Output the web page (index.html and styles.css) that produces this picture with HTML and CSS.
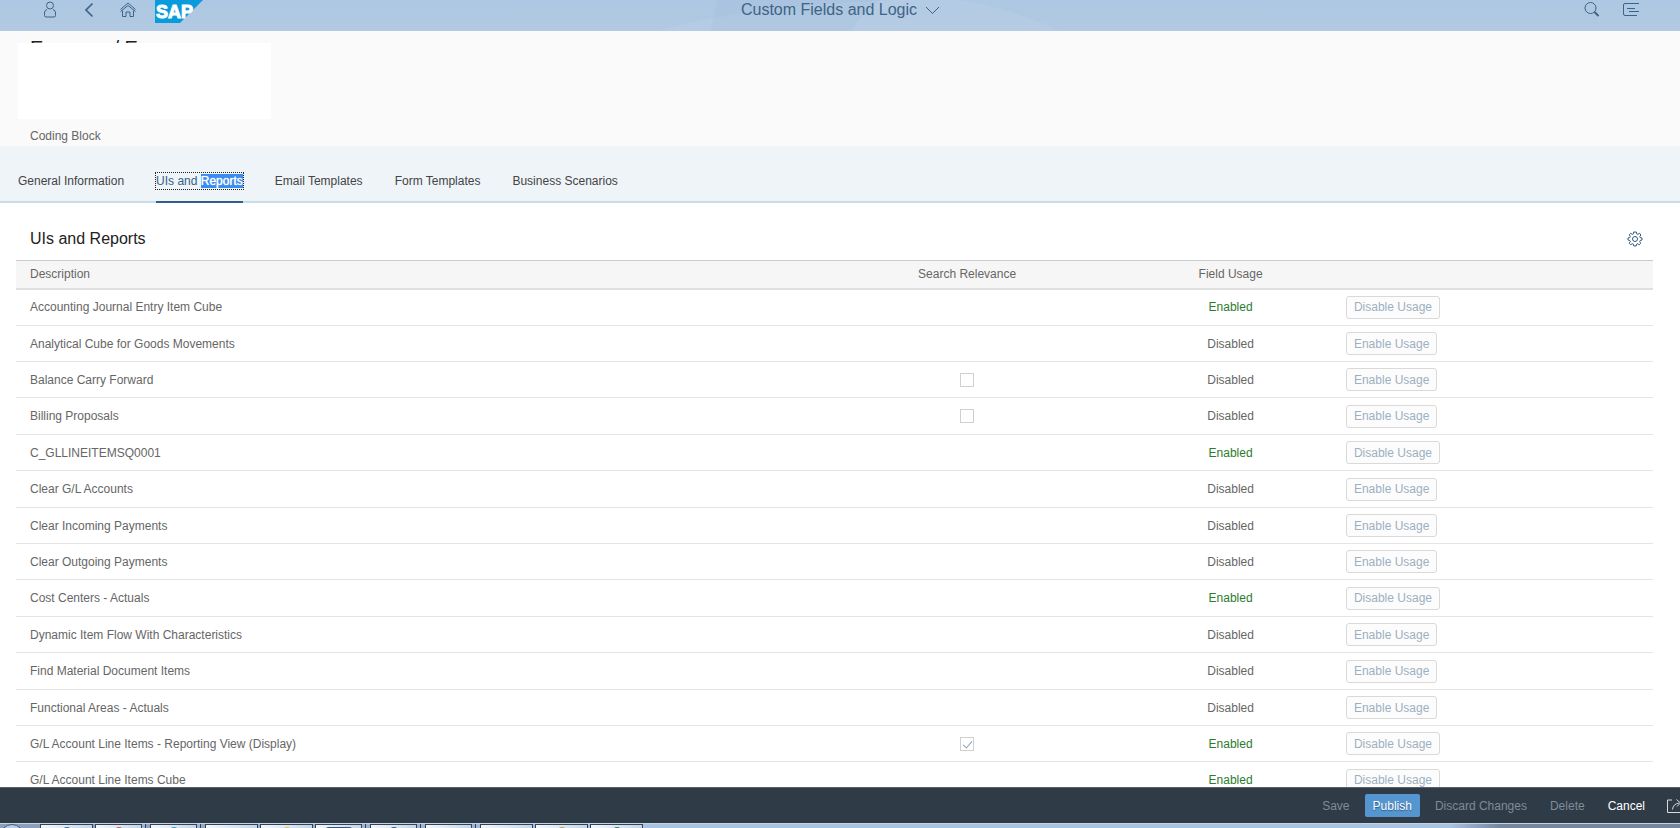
FILE: index.html
```
<!DOCTYPE html>
<html lang="en">
<head>
<meta charset="utf-8">
<title>Custom Fields and Logic</title>
<link rel="stylesheet" href="styles.css">
</head>
<body>
<header class="shell">
  <svg class="shell-art" viewBox="0 0 1680 31" preserveAspectRatio="none" aria-hidden="true"><path d="M660 31Q740 6 900 0H960Q1010 8 1060 31Z" fill="#fff" opacity=".07"/><path d="M718 0H880Q860 14 852 31H710Z" fill="#7da7cc" opacity=".1"/></svg>
  <nav class="shell-left">
    <button class="icon-btn" aria-label="User"><svg width="16" height="18" viewBox="0 0 16 18"><circle cx="8" cy="5.500" r="3.500"/><path d="M5 9.500Q2.500 10 2.500 13V15.500Q2.500 17 4 17H12Q13.500 17 13.500 15.500V13Q13.500 10 11 9.500"/></svg></button>
    <button class="icon-btn" aria-label="Back"><svg width="16" height="18" viewBox="0 0 16 18"><path d="M11.500 3.500L5 10L11.500 16.500" stroke-width="1.700"/></svg></button>
    <button class="icon-btn" aria-label="Home"><svg width="16" height="18" viewBox="0 0 16 18"><path d="M.5 9.500L8 3L15.500 9.500M.5 11.500L8 5.500L15.500 11.500M2.500 10.500V16.500H6V12H10V16.500H13.500V10.500"/></svg></button>
    <a class="logo" href="#" aria-label="SAP"><svg width="48" height="23" viewBox="0 0 48 23"><path d="M0 0H48L25 23H0Z" fill="#0a9bdc"/><text x="1" y="18" class="logo-text">SAP</text></svg></a>
  </nav>
  <button class="shell-title">Custom Fields and Logic <svg width="16" height="10" viewBox="0 0 16 10"><path d="M1 2L7.500 8.500L14 2"/></svg></button>
  <nav class="shell-right">
    <button class="icon-btn" aria-label="Search"><svg width="16" height="18" viewBox="0 0 16 18"><circle cx="6.500" cy="8" r="5.500"/><path d="M10.500 12L14.500 16" stroke-width="2"/></svg></button>
    <button class="icon-btn" aria-label="Notifications"><svg width="18" height="18" viewBox="0 0 18 18"><path d="M17 3.500H3Q1.500 3.500 1.500 5V14Q1.500 15.500 3 15.500H15M5 8.500H13M7 11.500H17"/></svg></button>
  </nav>
</header>

<main class="page">
  <section class="object-header">
    <h1 class="object-title">Expense / Ex</h1>
    <div class="cover"></div>
    <p class="object-sub">Coding Block</p>
  </section>
  <nav class="tabs">
    <a class="tab" href="#"><span>General Information</span></a>
    <a class="tab tab-active" href="#"><span>UIs and <mark>Reports</mark></span></a>
    <a class="tab" href="#"><span>Email Templates</span></a>
    <a class="tab" href="#"><span>Form Templates</span></a>
    <a class="tab" href="#"><span>Business Scenarios</span></a>
  </nav>
  <section class="content">
    <div class="toolbar">
      <h2>UIs and Reports</h2>
      <button class="icon-btn" aria-label="Settings"><svg width="16" height="16" viewBox="0 0 16 16"><path d="M6.700 1H9.300L9.700 2.900L10.900 3.400L12.500 2.300L13.900 4L12.800 5.400L13.200 6.600L15 7V9L13.200 9.500L12.700 10.700L13.700 12.300L12.200 13.800L10.700 12.700L9.600 13.200L9.200 15H6.800L6.400 13.200L5.200 12.700L3.700 13.700L2.200 12.200L3.300 10.700L2.800 9.500L1 9V7L2.800 6.500L3.300 5.300L2.200 3.800L3.800 2.300L5.200 3.400L6.400 2.900Z"/><circle cx="8" cy="8" r="2.500"/></svg></button>
    </div>
    <table class="grid">
      <colgroup><col class="c-desc"><col class="c-search"><col class="c-usage"><col class="c-action"></colgroup>
      <thead><tr><th>Description</th><th class="mid">Search Relevance</th><th class="mid">Field Usage</th><th></th></tr></thead>
      <tbody>
        <tr><td>Accounting Journal Entry Item Cube</td><td></td><td class="mid on">Enabled</td><td class="act"><button class="usage" disabled>Disable Usage</button></td></tr>
        <tr><td>Analytical Cube for Goods Movements</td><td></td><td class="mid">Disabled</td><td class="act"><button class="usage" disabled>Enable Usage</button></td></tr>
        <tr><td>Balance Carry Forward</td><td class="mid"><input type="checkbox" disabled aria-label="Search relevance, Balance Carry Forward"></td><td class="mid">Disabled</td><td class="act"><button class="usage" disabled>Enable Usage</button></td></tr>
        <tr><td>Billing Proposals</td><td class="mid"><input type="checkbox" disabled aria-label="Search relevance, Billing Proposals"></td><td class="mid">Disabled</td><td class="act"><button class="usage" disabled>Enable Usage</button></td></tr>
        <tr><td>C_GLLINEITEMSQ0001</td><td></td><td class="mid on">Enabled</td><td class="act"><button class="usage" disabled>Disable Usage</button></td></tr>
        <tr><td>Clear G/L Accounts</td><td></td><td class="mid">Disabled</td><td class="act"><button class="usage" disabled>Enable Usage</button></td></tr>
        <tr><td>Clear Incoming Payments</td><td></td><td class="mid">Disabled</td><td class="act"><button class="usage" disabled>Enable Usage</button></td></tr>
        <tr><td>Clear Outgoing Payments</td><td></td><td class="mid">Disabled</td><td class="act"><button class="usage" disabled>Enable Usage</button></td></tr>
        <tr><td>Cost Centers - Actuals</td><td></td><td class="mid on">Enabled</td><td class="act"><button class="usage" disabled>Disable Usage</button></td></tr>
        <tr><td>Dynamic Item Flow With Characteristics</td><td></td><td class="mid">Disabled</td><td class="act"><button class="usage" disabled>Enable Usage</button></td></tr>
        <tr><td>Find Material Document Items</td><td></td><td class="mid">Disabled</td><td class="act"><button class="usage" disabled>Enable Usage</button></td></tr>
        <tr><td>Functional Areas - Actuals</td><td></td><td class="mid">Disabled</td><td class="act"><button class="usage" disabled>Enable Usage</button></td></tr>
        <tr><td>G/L Account Line Items - Reporting View (Display)</td><td class="mid"><input type="checkbox" checked disabled aria-label="Search relevance, G/L Account Line Items - Reporting View (Display)"></td><td class="mid on">Enabled</td><td class="act"><button class="usage" disabled>Disable Usage</button></td></tr>
        <tr><td>G/L Account Line Items Cube</td><td></td><td class="mid on">Enabled</td><td class="act"><button class="usage" disabled>Disable Usage</button></td></tr>
      </tbody>
    </table>
  </section>
</main>

<footer class="actions">
  <button class="action" disabled>Save</button>
  <button class="action primary">Publish</button>
  <button class="action" disabled>Discard Changes</button>
  <button class="action" disabled>Delete</button>
  <button class="action">Cancel</button>
  <button class="share" aria-label="Share"><svg width="18" height="16" viewBox="0 0 18 16"><path d="M6 2H1.500V14.500H14.500V11M6.500 11.500Q7 6 13 5M10.500 1.500L14.500 5L11 8.500"/></svg></button>
</footer>
<div class="taskbar">
  <i class="orb"></i>
  <i class="task blue"></i><i class="task red stacked"></i><i class="task cyan stacked"></i><i class="task"></i><i class="task yellow"></i><i class="task dark stacked"></i><i class="task navy stacked"></i><i class="task stacked"></i><i class="task"></i><i class="task orange"></i><i class="task green"></i>
</div>
</body>
</html>
```
FILE: styles.css
```
* { box-sizing: border-box; }

body {
  margin: 0;
  height: 100vh;
  display: flex;
  flex-direction: column;
  overflow: hidden;
  font: 12px/16px "Liberation Sans", Arial, sans-serif;
  color: #666;
  background: #fff;
}

button { font: inherit; color: inherit; margin: 0; padding: 0; border: 0; background: none; }
svg { display: block; fill: none; stroke: currentColor; }
h1, h2, p { margin: 0; font-weight: normal; }

/* Shell bar */
.shell {
  position: relative;
  flex: none;
  height: 31px;
  display: flex;
  justify-content: space-between;
  align-items: flex-start;
  background: linear-gradient(#aec7e2, #b1c9e2);
  color: #3f6386;
}
.shell-art { position: absolute; inset: 0; width: 100%; height: 100%; stroke: none; }
.shell-left, .shell-right { position: relative; flex: 1; display: flex; align-items: flex-start; }
.shell-left { gap: 23px; padding-left: 42px; }
.shell-right { justify-content: flex-end; gap: 22px; padding-right: 40px; }
.logo svg { stroke: none; }
.shell-left .logo { margin-left: -4px; }
.logo-text { font: bold 18px "Liberation Sans", Arial, sans-serif; fill: #fff; stroke: #fff; stroke-width: 1px; }
.shell-title { position: relative; display: flex; align-items: center; gap: 8px; font-size: 16px; line-height: 20px; }

/* Page */
.page { flex: 1; min-height: 0; overflow: hidden; }
.object-header { position: relative; height: 115px; padding: 5px 30px 0; background: #fafafa; display: flex; flex-direction: column; justify-content: space-between; }
.object-title { font-size: 20px; line-height: 24px; color: #222; }
.cover { position: absolute; left: 18px; top: 12px; width: 253px; height: 76px; background: #fff; }
.object-sub { padding-bottom: 2px; }

.tabs {
  display: flex;
  gap: 32px;
  height: 57px;
  padding: 0 18px;
  background: #eff4f8;
  border-bottom: 2px solid #c8dcea;
}
.tab { display: flex; align-items: center; padding-top: 15px; margin-bottom: -2px; border-bottom: 2px solid transparent; color: #444; text-decoration: none; }
.tab-active { color: #346187; border-bottom-color: #2f5f8c; }
.tab-active span { outline: 1px dotted #222; }
mark { background: #3a8cf0; color: #fff; text-shadow: 0 0 1px #fff; }

.content { padding: 22px 27px 0 16px; }
.toolbar { display: flex; justify-content: space-between; align-items: center; height: 35px; padding: 0 10px 8px 14px; color: #34597c; }
.toolbar h2 { font-size: 16px; line-height: 20px; color: #222; }

.grid { width: 100%; border-collapse: collapse; table-layout: fixed; }
.c-desc { width: 48.8%; }
.c-search { width: 18.6%; }
.c-usage { width: 13.6%; }
.grid th { height: 28px; padding: 0; font-weight: normal; text-align: left; background: #f6f6f6; border-top: 1px solid #ccc; border-bottom: 2px solid #e0e0e0; }
.grid td { height: 36px; padding: 0; border-bottom: 1px solid #e4e4e4; }
.grid tr:nth-child(5n+1) td, .grid tr:nth-child(5n+4) td { height: 37px; }
.grid th:first-child, .grid td:first-child { padding-left: 14px; }
.grid .mid { text-align: center; }
.grid td.on { color: #2b7c2b; }
.grid .act { padding-left: 4px; }
.usage { display: block; height: 23px; padding: 0 7px; border: 1px solid #d9d9d9; border-radius: 3px; background: #fcfcfc; color: #9db0c2; }
.grid input { appearance: none; display: block; width: 14px; height: 14px; margin: 0 auto; border: 1px solid #d0d0d0; background: #fff; }
.grid input:checked::before { content: ""; display: block; width: 4px; height: 8px; margin: 1px auto 0; border: solid #8ba3b8; border-width: 0 1px 1px 0; transform: rotate(40deg); }

/* Footer actions */
.actions { flex: none; display: flex; justify-content: flex-end; align-items: center; height: 36px; border-top: 1px solid #56616b; background: #2f3c48; color: #fff; overflow: hidden; }
.action { height: 23px; padding: 0 8px; margin-left: 7px; border-radius: 2px; }
.action:disabled { color: #7f8b95; }
.primary { background: #5596d0; text-shadow: 0 1px 1px #2a5a88; }
.share { margin: 0 -4px 0 13px; color: #d5dbe1; }

/* Desktop taskbar */
.taskbar { flex: none; display: flex; height: 5px; overflow: hidden; border-top: 1px solid #c4d3e2; background: linear-gradient(90deg, #8aa0bc 0 40px, #a9c3e2 640px 1450px, #74879f 1500px); }
.orb { flex: none; width: 24px; height: 24px; border-radius: 12px; border: 1px solid #445b78; background: #b5cfe6; margin-right: 16px; }
.task { flex: none; width: 53px; height: 5px; margin-right: 2px; border: 1px solid #34435a; border-bottom: 0; background: linear-gradient(100deg, #f5f8fb, #c4d6e9); }
.task::after { content: ""; display: block; width: 8px; height: 4px; margin: 2px auto 0; border-radius: 4px 4px 0 0; }
.stacked { width: 47px; margin-right: 8px; box-shadow: 3px 0 #9db6d4, 4px 0 #34435a; }
.blue::after { background: #2f6ea8; }
.red::after { background: #d0584e; }
.cyan::after { background: #22a6c8; }
.yellow::after { background: #e6c92d; }
.dark::after { width: 28px; background: #31557f; }
.navy::after { background: #31557f; }
.orange::after { background: #c89a4e; }
.green::after { background: #2e7d4a; }
```
